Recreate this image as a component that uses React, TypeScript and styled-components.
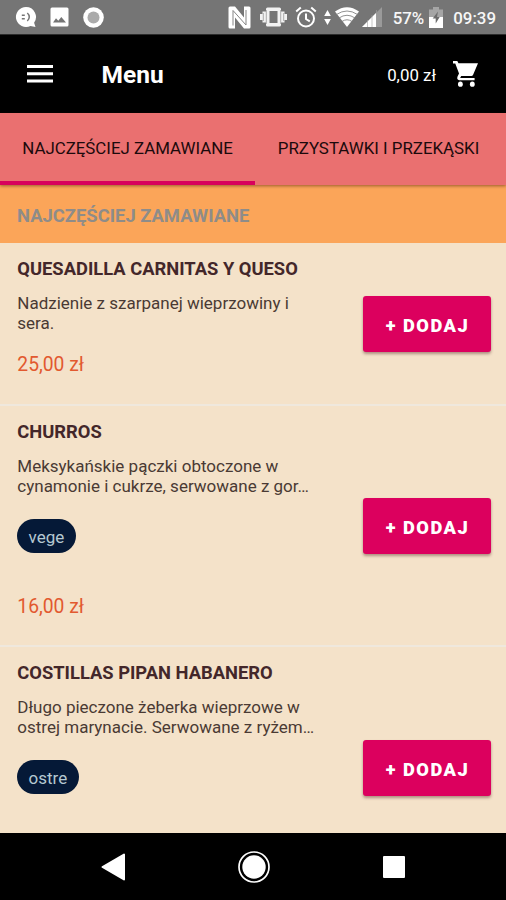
import React from "react";
import styled, { createGlobalStyle } from "styled-components";

const Global = createGlobalStyle`
  * { box-sizing: border-box; }
  body { margin: 0; background: #000; }
`;

const Screen = styled.div`
  width: 506px;
  height: 900px;
  display: flex;
  flex-direction: column;
  overflow: hidden;
  background: #f4e2c9;
  font-family: Roboto, sans-serif;
`;

const StatusBar = styled.div`
  flex: none;
  height: 35px;
  padding: 0 10px 0 15px;
  display: flex;
  justify-content: space-between;
  align-items: center;
  background: #757575;
  border-bottom: 1px solid #2c2c2c;
  color: #fff;
`;

const StatusGroup = styled.div`
  display: flex;
  align-items: center;
  height: 34px;
`;

const StatusIcon = styled.svg<{ $gap?: number }>`
  display: block;
  flex: none;
  margin-left: ${(p) => p.$gap ?? 0}px;
`;

const StatusText = styled.span<{ $gap: number }>`
  margin-left: ${(p) => p.$gap}px;
  font-size: 16.87px;
  line-height: 20px;
  font-weight: 500;
  color: #f7f7f7;
  padding-top: 1px;
  white-space: nowrap;
`;

const AppBar = styled.header`
  flex: none;
  height: 78px;
  padding: 0 28px 0 26px;
  display: flex;
  align-items: center;
  background: #000;
  color: #fff;
`;

const AppTitle = styled.h1`
  margin: 0 auto 0 47.5px;
  padding-top: 2px;
  font-size: 24.5px;
  line-height: 30px;
  font-weight: 700;
`;

const CartTotal = styled.span`
  margin-right: 17px;
  padding-top: 2px;
  font-size: 16.87px;
  line-height: 20px;
`;

const Tabs = styled.nav`
  flex: none;
  height: 72px;
  display: flex;
  background: #ea7070;
  box-shadow: 0 1px 3px rgba(60, 20, 0, 0.5);
  z-index: 1;
`;

const Tab = styled.div<{ $active?: boolean }>`
  flex: ${(p) => (p.$active ? "0 0 255px" : "1")};
  display: flex;
  align-items: center;
  justify-content: center;
  padding: 1px ${(p) => (p.$active ? 0 : 4)}px 0 0;
  border-bottom: 4px solid ${(p) => (p.$active ? "#d8005c" : "transparent")};
  font-size: 16.87px;
  line-height: 20px;
  color: #1c0a0c;
  white-space: nowrap;
`;

const SectionTitle = styled.h2`
  flex: none;
  height: 58px;
  margin: 0;
  padding: 2px 17px 0;
  display: flex;
  align-items: center;
  background: #fba559;
  font-size: 18.4px;
  font-weight: 700;
  color: #8e8c89;
`;

const List = styled.main`
  flex: 1;
  min-height: 0;
  overflow: hidden;
`;

const Item = styled.article<{ $height: number }>`
  height: ${(p) => p.$height}px;
  padding: 15px 15px 0 17.3px;
  display: flex;
  justify-content: space-between;
  border-bottom: 2px solid #efe8dd;
`;

const Info = styled.div`
  width: 310px;
`;

const Name = styled.h3`
  margin: 0 0 13px;
  font-size: 18.35px;
  line-height: 22px;
  font-weight: 700;
  color: #43272a;
`;

const Description = styled.p`
  margin: 0;
  font-size: 17px;
  line-height: 20px;
  color: #4a3a34;
  white-space: pre-line;
`;

const Chip = styled.span`
  display: flex;
  width: fit-content;
  height: 34px;
  margin: 22.5px 0 43px;
  padding: 2px 11.3px 0;
  align-items: center;
  border-radius: 17px;
  background: #051937;
  font-size: 17px;
  color: #b5c8d1;
`;

const Price = styled.div`
  margin-top: 21px;
  font-size: 19.3px;
  line-height: 22px;
  color: #e2592f;
`;

const AddButton = styled.button`
  align-self: center;
  width: 128px;
  height: 56px;
  margin: 0 0 15px;
  padding: 4px 0 0 1px;
  border: 0;
  border-radius: 3px;
  background: #dc005e;
  box-shadow: 0 2px 3px rgba(70, 20, 20, 0.4);
  font: 900 18.27px/22px Roboto, sans-serif;
  letter-spacing: 1.5px;
  color: #fff;
`;

const NavBar = styled.footer`
  flex: none;
  height: 67px;
  display: grid;
  grid-template-columns: 183px 141px 1fr;
  align-items: center;
  justify-items: center;
  background: #000;
`;

const NavCell = styled.div<{ $inset?: string }>`
  padding: ${(p) => p.$inset ?? "0"};
  line-height: 0;
`;

interface Dish {
  name: string;
  description: string;
  tag?: string;
  price: string;
  height: number;
}

const dishes: Dish[] = [
  {
    name: "QUESADILLA CARNITAS Y QUESO",
    description: "Nadzienie z szarpanej wieprzowiny i\nsera.",
    price: "25,00 zł",
    height: 163,
  },
  {
    name: "CHURROS",
    description: "Meksykańskie pączki obtoczone w\ncynamonie i cukrze, serwowane z gor…",
    tag: "vege",
    price: "16,00 zł",
    height: 241,
  },
  {
    name: "COSTILLAS PIPAN HABANERO",
    description: "Długo pieczone żeberka wieprzowe w\nostrej marynacie. Serwowane z ryżem…",
    tag: "ostre",
    price: "",
    height: 243,
  },
];

const ChatIcon = () => (
  <StatusIcon width="22" height="22" viewBox="0 0 22 22">
    <path d="M11 1a10 10 0 1 0 4.5 18.9L20.5 21l-1.4-4.2A10 10 0 0 0 11 1z" fill="#fff" />
    <g fill="none" stroke="#757575" strokeWidth="1.5">
      <path d="M6.800 9.200h3M6.800 12.800h3M12.300 7c2.600 2.200 2.600 5.800 0 8" />
    </g>
  </StatusIcon>
);

const PictureIcon = () => (
  <StatusIcon $gap={13} width="19" height="20" viewBox="0 0 19 20">
    <rect x=".5" y=".5" width="18" height="19" rx="1.500" fill="#fff" />
    <path d="M3 15.500l3-4.200 2.300 2.500 3-3.800 4.700 5.500z" fill="#757575" />
  </StatusIcon>
);

const RecordIcon = () => (
  <StatusIcon $gap={14} width="21" height="21" viewBox="0 0 21 21">
    <circle cx="10.500" cy="10.500" r="10.300" fill="#fff" />
    <circle cx="10.500" cy="10.500" r="6" fill="#ababab" />
  </StatusIcon>
);

const NfcIcon = () => (
  <StatusIcon width="23" height="23" viewBox="0 0 23 23">
    <path d="M2 .5h5l9 11V.5h5q1.500 0 1.500 1.500v19q0 1.500-1.500 1.500h-5l-9-11v11H2Q.5 22.500.5 21V2Q.5.5 2 .5z" fill="#fff" />
    <path d="M5 19.500V4.500l13 14.500V4" fill="none" stroke="#858585" strokeWidth="1" />
  </StatusIcon>
);

const VibrateIcon = () => (
  <StatusIcon $gap={9} width="27" height="22" viewBox="0 0 27 22">
    <path
      d="M0 8h2.500V5.500H6V3q0-1.500 1.500-1.500h12Q21 1.500 21 3v2.500h3.500V8H27v6h-2.500v2.500H21V19q0 1.500-1.500 1.500h-12Q6 20.500 6 19v-2.500H2.500V14H0z"
      fill="#f2f2f2"
    />
    <path d="M9.500 5h8v12h-8z" fill="#757575" />
    <path d="M3.300 7v8M6.300 4v14M20.700 4v14M23.700 7v8" stroke="#999" strokeWidth=".8" />
  </StatusIcon>
);

const AlarmIcon = () => (
  <StatusIcon $gap={8} width="22" height="22" viewBox="0 0 22 22">
    <g fill="none" stroke="#fff" strokeWidth="2">
      <circle cx="11" cy="12.500" r="8" />
      <path d="M1.200 5.500l4.600-3.900M20.800 5.500l-4.600-3.900M11 7.500V13l3.800 2.300" />
    </g>
  </StatusIcon>
);

const TrafficIcon = () => (
  <StatusIcon $gap={7} width="7" height="17" viewBox="0 0 8 18">
    <path d="M4 .5l3.800 6.800H.2zM4 17.500L.2 10.700h7.600z" fill="#fff" />
  </StatusIcon>
);

const WifiIcon = () => (
  <StatusIcon $gap={4} width="24" height="20" viewBox="0 0 24 20">
    <path d="M0 4.500Q12-4 24 4.500L12 20z" fill="#fff" />
    <path d="M1.500 7.500q10.500-7 21 0M4 11q8-5.500 16 0M7 14.500q5-3.500 10 0" fill="none" stroke="#858585" strokeWidth=".9" />
  </StatusIcon>
);

const SignalIcon = () => (
  <StatusIcon $gap={3} width="20" height="20" viewBox="0 0 20 20">
    <path d="M0 20L20 0v20z" fill="#9a9a9a" />
    <path d="M0 20L14 6v14z" fill="#fff" />
    <path d="M5.500 13v7M10 8v12M14.500 3v17" stroke="#a0a0a0" strokeWidth=".6" />
  </StatusIcon>
);

const BatteryIcon = () => (
  <StatusIcon $gap={5} width="14" height="21" viewBox="0 0 14 21">
    <path d="M4 0h6v2.500h4V21H0V2.500h4z" fill="#a5a5a5" />
    <path d="M0 10h14v11H0z" fill="#fff" />
    <path d="M9 4.500L3.700 11.500h3V16.500l4-6.500H8z" fill="#6c6c6c" />
  </StatusIcon>
);

const MenuIcon = () => (
  <svg width="28" height="20" viewBox="0 0 28 20">
    <path d="M1 2.500h26M1 9.800h26M1 17h26" stroke="#fff" strokeWidth="3" />
  </svg>
);

const CartIcon = () => (
  <svg width="25" height="26" viewBox="1 2 22 20" preserveAspectRatio="none">
    <g fill="#fff">
      <circle cx="7.500" cy="19.800" r="2.100" />
      <circle cx="18" cy="19.800" r="2.100" />
      <path d="M1 2h3.800l1 1.800H23l-4.300 8.800q-.5 1-1.600 1H8.200l-.9 1.500H20v1.800H6.500Q4 16.500 5 14l1.300-2.300L3 4H1z" />
    </g>
  </svg>
);

const BackIcon = () => (
  <svg width="26" height="30" viewBox="0 0 26 30">
    <path d="M2.500 15L24 2.500v25z" fill="#fff" stroke="#fff" strokeWidth="2" strokeLinejoin="round" />
  </svg>
);

const HomeIcon = () => (
  <svg width="34" height="34" viewBox="0 0 34 34">
    <circle cx="17" cy="17" r="15" fill="none" stroke="#fff" strokeWidth="1.700" />
    <circle cx="17" cy="17" r="11.700" fill="#fff" />
  </svg>
);

const RecentsIcon = () => (
  <svg width="22" height="22" viewBox="0 0 22 22">
    <rect width="22" height="22" rx="1" fill="#fff" />
  </svg>
);

export default function App() {
  return (
    <>
      <Global />
      <Screen>
        <StatusBar>
          <StatusGroup>
            <ChatIcon />
            <PictureIcon />
            <RecordIcon />
          </StatusGroup>
          <StatusGroup>
            <NfcIcon />
            <VibrateIcon />
            <AlarmIcon />
            <TrafficIcon />
            <WifiIcon />
            <SignalIcon />
            <StatusText $gap={11}>57%</StatusText>
            <BatteryIcon />
            <StatusText $gap={10}>09:39</StatusText>
          </StatusGroup>
        </StatusBar>
        <AppBar>
          <MenuIcon />
          <AppTitle>Menu</AppTitle>
          <CartTotal>0,00 zł</CartTotal>
          <CartIcon />
        </AppBar>
        <Tabs>
          <Tab $active>NAJCZĘŚCIEJ ZAMAWIANE</Tab>
          <Tab>PRZYSTAWKI I PRZEKĄSKI</Tab>
        </Tabs>
        <SectionTitle>NAJCZĘŚCIEJ ZAMAWIANE</SectionTitle>
        <List>
          {dishes.map((dish) => (
            <Item key={dish.name} $height={dish.height}>
              <Info>
                <Name>{dish.name}</Name>
                <Description>{dish.description}</Description>
                {dish.tag && <Chip>{dish.tag}</Chip>}
                {dish.price && <Price>{dish.price}</Price>}
              </Info>
              <AddButton>+ DODAJ</AddButton>
            </Item>
          ))}
        </List>
        <NavBar>
          <NavCell $inset="0 0 0 43px"><BackIcon /></NavCell>
          <NavCell><HomeIcon /></NavCell>
          <NavCell $inset="0 42px 0 0"><RecentsIcon /></NavCell>
        </NavBar>
      </Screen>
    </>
  );
}
